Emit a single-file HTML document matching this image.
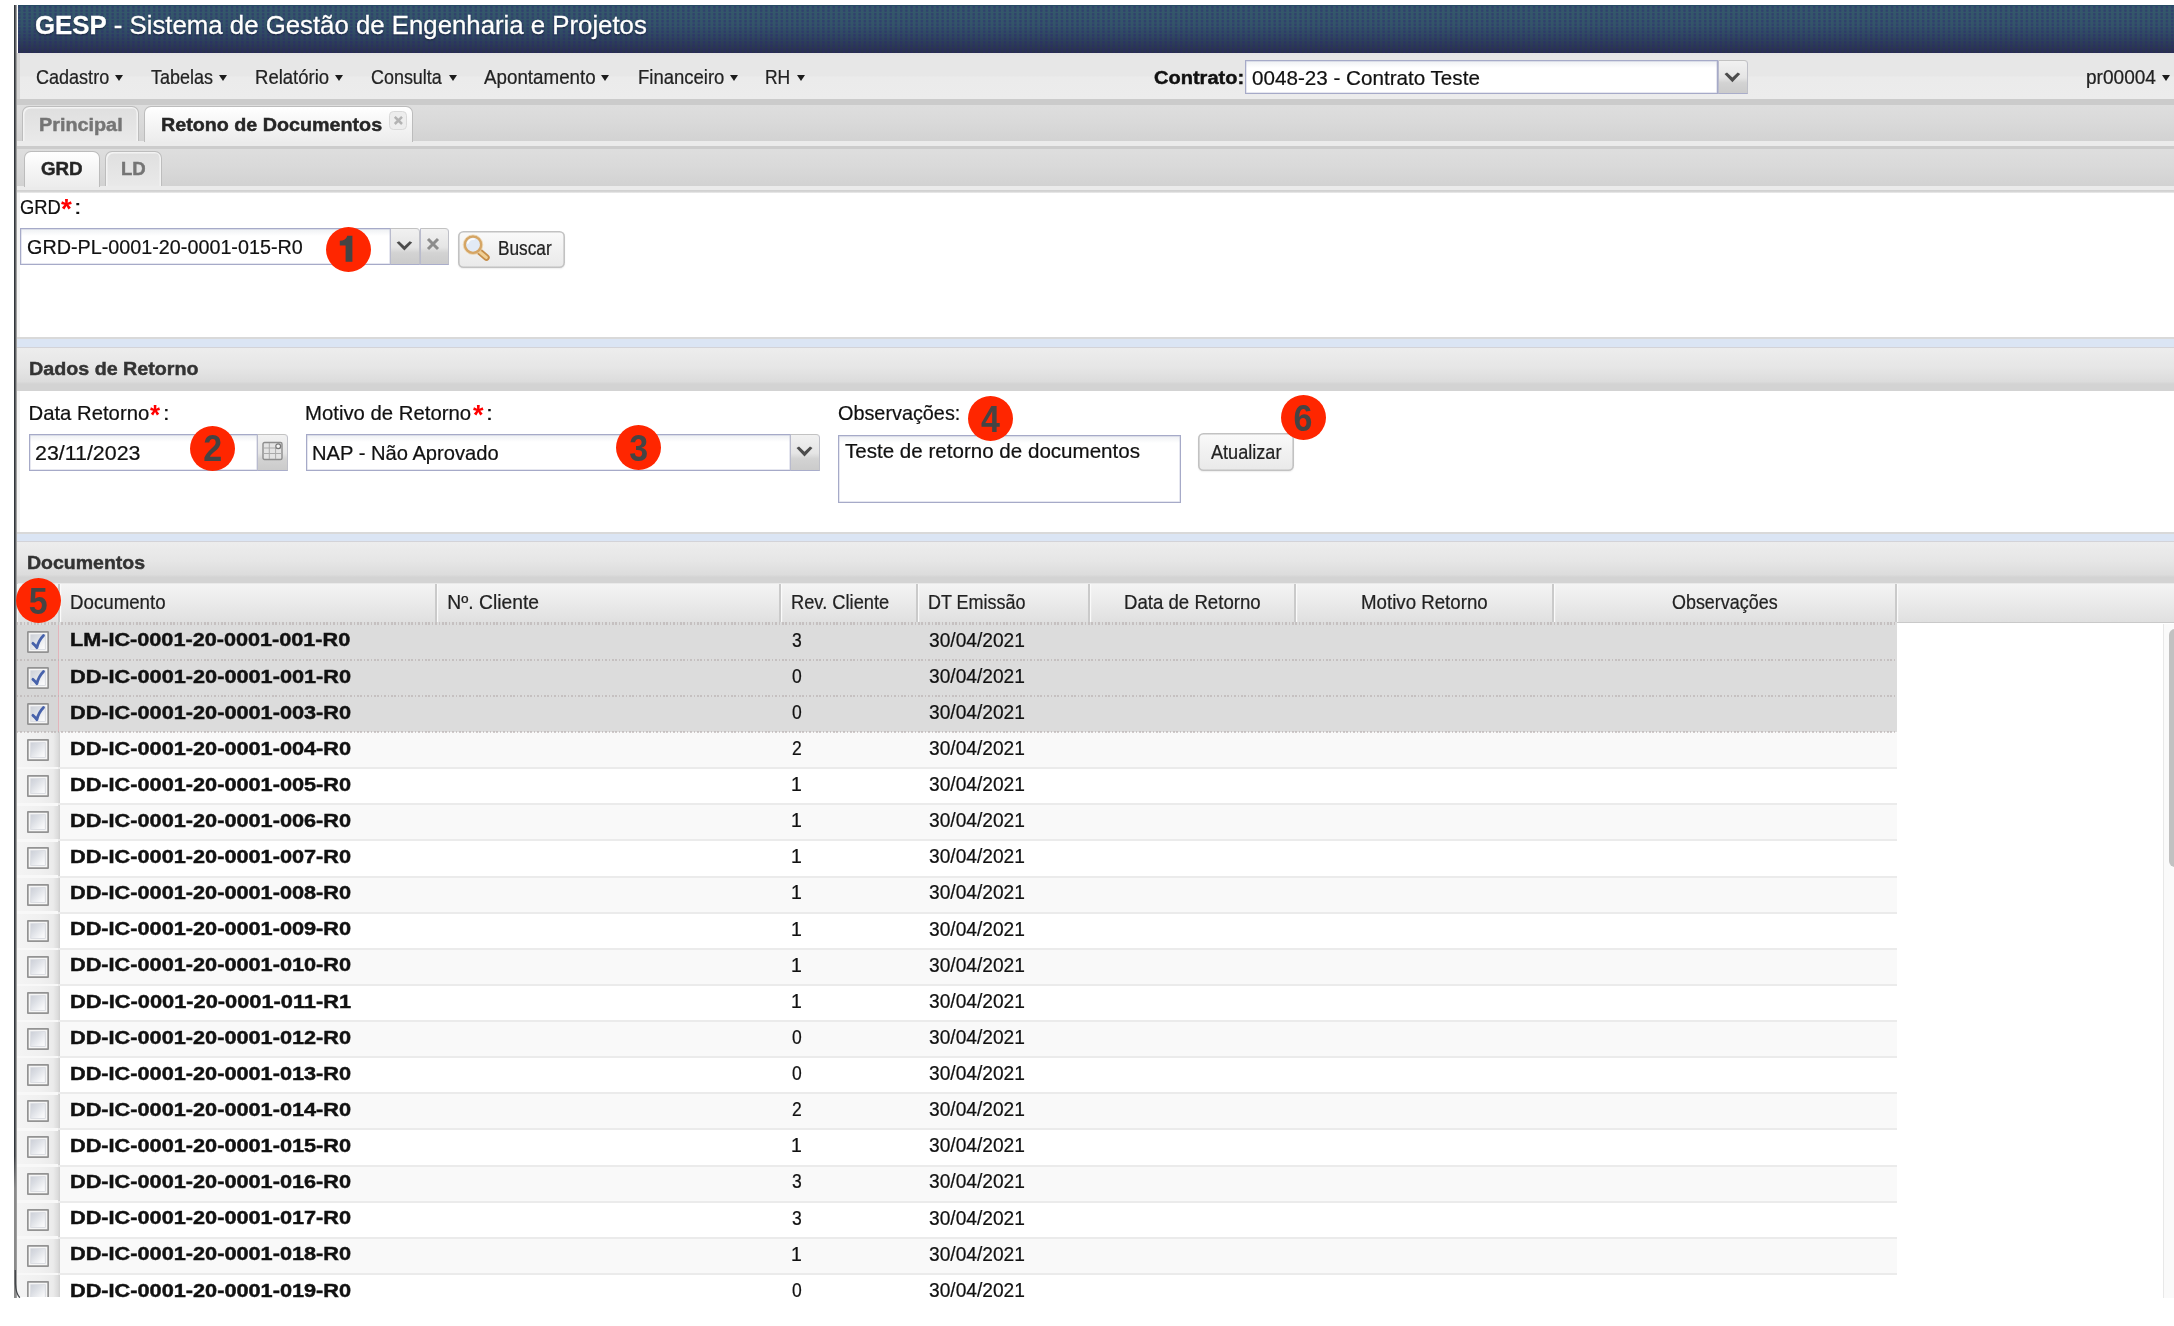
<!DOCTYPE html>
<html lang="pt-br"><head><meta charset="utf-8"><title>GESP - Retorno de Documentos</title>
<style>
html,body{margin:0;padding:0;background:#fff;}
body{width:2174px;height:1326px;overflow:hidden;position:relative;font-family:"Liberation Sans",sans-serif;}
div,i,span{box-sizing:border-box;}
.abs,.t,.arr,.row,.cb,.circ,.vd{position:absolute;display:block;}
.t{height:30px;line-height:30px;white-space:nowrap;transform-origin:0 50%;-webkit-text-stroke:0.22px currentColor;}
.arr{width:0;height:0;border-left:4.9px solid transparent;border-right:4.9px solid transparent;border-top:6px solid #1c1c1c;}
.hdr{left:18px;top:5px;width:2156px;height:47.7px;background-color:#2e4765;border-top:1px solid #254a62;
 background-image:radial-gradient(circle at 1.3px 1.2px,rgba(44,36,112,.42) 1px,rgba(44,36,112,0) 1.7px),linear-gradient(#34596b,#335469 40%,#2f4862 62%,#2b3b56 82%,#28304c 100%);
 background-size:5.2px 3.5px,100% 100%;}
.menubar{left:17px;top:52.7px;width:2157px;height:46.3px;background:linear-gradient(#e4e4e4,#e7e7e7 10%,#e7e7e7 50%,#ebebeb 52%,#ececec);}
.tabbar{left:17px;width:2157px;background:linear-gradient(#dedede,#d9d9d9 50%,#d2d2d2);}
.band{left:17px;width:2157px;}
.tab{border:1.5px solid #bdbdbd;border-bottom:none;border-radius:7px 7px 0 0;background:linear-gradient(#dfdfdf,#e9e9e9);box-shadow:inset 1.5px 1.5px 0 #f3f3f3,inset -1.5px 0 0 #f3f3f3;}
.tab.act{background:linear-gradient(#ffffff,#f6f6f6 45%,#ececec);border-color:#bcbcbc;box-shadow:none;}
.split{left:17px;width:2157px;background:#dbe5f4;border-top:2px solid #d9d9d9;border-bottom:1.2px solid #d3d3d8;}
.phdr{left:17px;width:2157px;background:linear-gradient(#ededed,#e6e6e6 45%,#dcdcdc 78%,#d3d3d3 84%,#d3d3d3);}
.inp{background:linear-gradient(#eef0f3,#fff 7px);border:1px solid #a6aac8;box-shadow:inset 0 0 0 .5px rgba(166,170,200,.55);}
.btnsq{border:1px solid #a9adcb;border-color:#c2c2c2 #bfc0c8 #a9adcb #b9bbcd;background:linear-gradient(#f1f1f1,#e5e5e5 52%,#d3d3d3 68%,#cbcbcb);}
.btn{border-radius:5.5px;background:linear-gradient(#fafafa,#f1f1f1 50%,#e9e9e9);box-shadow:inset 0 0 0 1.6px #c2c2c2,0 1px 1.5px rgba(0,0,0,.07);}
.circ{width:45px;height:45px;border-radius:50%;background:#ff2600;color:#444;font-weight:bold;font-size:34px;line-height:45px;text-align:center;}
.circ b{display:inline-block;transform:scaleY(1.11);transform-origin:50% 76%;position:relative;top:1.7px;}
#txt{position:absolute;left:0;top:0;width:2174px;height:1326px;will-change:transform;}
.bd{font-weight:bold;-webkit-text-stroke:0.45px currentColor;}
.thead{left:18px;top:583px;width:2156px;height:40px;background:linear-gradient(#f4f4f4,#ebebeb 45%,#e0e0e0);border-bottom:1px solid #c9c9c9;border-top:1px solid #e9e9e9;}
.vd{top:584px;width:1.6px;height:38px;background:#cacaca;box-shadow:1.2px 0 0 #fafafa;}
.row{left:17px;width:1880px;background:#fff;}
.row.alt{background:#f9f9f9;}
.row.sel{background:#dcdcdc;}
.row .cc{position:absolute;left:0;top:0;bottom:0;width:42.6px;background:linear-gradient(90deg,#f4f4f4,#f0f0f0 55%,#ebebeb 84%,#dcdcdc 95%,#cfcfcf);}
.row.sel .cc{background:#d6d6d6;border-right:1.2px solid #e2b4bb;width:42.4px;}
.rl{position:absolute;left:17px;width:1880px;height:2px;background:#ebebeb;}
.rl.dot{height:2.6px;background:repeating-linear-gradient(90deg,#b7afaf 0,#b7afaf 1.5px,rgba(220,220,220,0) 1.5px,rgba(220,220,220,0) 3.4px);opacity:.62;}
.cb{left:26.9px;width:22.1px;height:22.1px;border-radius:1px;background:linear-gradient(135deg,#c2c6cf,#dadde3 38%,#f4f5f7 68%,#fdfdfd 85%);box-shadow:inset 0 0 0 1.7px #939393,inset 0 0 0 3.3px #f6f6f6,inset 0 0 0 4.1px #d3d6dc;}
.cb svg{position:absolute;left:0;top:0;}
.rlc{position:absolute;left:17px;width:40.5px;height:2.6px;background:#f8f8f8;}

</style></head>
<body>
<!-- left window border -->
<div class="abs" style="left:14px;top:5px;width:3px;height:1292.7px;background:linear-gradient(90deg,#31353a 0,#31353a 1px,#606366 1px,#606366 2px,#a0a0a0 2px)"></div>
<div class="abs" style="left:14px;top:5px;width:3px;height:1292.7px;background:linear-gradient(90deg,#8a8a8a 0,#8a8a8a 2px,rgba(138,138,138,0) 2px);-webkit-mask-image:linear-gradient(rgba(0,0,0,0) 89%,#000 91.5%);mask-image:linear-gradient(rgba(0,0,0,0) 89%,#000 91.5%)"></div>
<div class="abs" style="left:17px;top:52.7px;width:2.8px;height:46px;background:#d6d6d6"></div>
<div class="abs" style="left:17px;top:193px;width:3px;height:1104px;background:#f4f4f4"></div>

<div class="abs hdr"></div>
<div class="abs menubar"></div>
<div class="abs" style="left:17px;top:52.7px;width:2.8px;height:46px;background:#d6d6d6"></div>
<div class="abs band" style="top:98.7px;height:6px;background:#cbcbcb"></div>
<div class="abs tabbar" style="top:104.5px;height:37px"></div>
<div class="abs band" style="top:141.4px;height:4.2px;background:#ebebeb"></div>
<div class="abs band" style="top:145.5px;height:4px;background:#cccccc"></div>
<div class="abs tabbar" style="top:149.3px;height:37px"></div>
<div class="abs band" style="top:186.2px;height:4px;background:#ebebeb"></div>
<div class="abs band" style="top:190px;height:3.4px;background:linear-gradient(#cfcfcf,#d6d6d6 60%,#f0f0f0)"></div>

<!-- main tabs -->
<div class="abs tab" style="left:21.6px;top:106.2px;width:117.4px;height:35.3px"></div>
<div class="abs tab act" style="left:143.5px;top:106.2px;width:269px;height:36px"></div>
<div class="abs" style="left:388.7px;top:111px;width:18.7px;height:18.8px;border:1.3px solid #d9d9d9;border-radius:4.5px;background:#ededed"></div>
<svg class="abs" style="left:388.7px;top:111px" width="19" height="19" viewBox="0 0 19 19"><path d="M5.8 5.8 L13 13 M13 5.8 L5.8 13" stroke="#b3b3b3" stroke-width="2.5" fill="none"/></svg>
<!-- sub tabs -->
<div class="abs tab act" style="left:23.7px;top:151.2px;width:76px;height:35.6px"></div>
<div class="abs tab" style="left:104.5px;top:151.2px;width:57.7px;height:35px"></div>

<!-- GRD combo -->
<div class="abs inp" style="left:20px;top:227.6px;width:370.5px;height:37px"></div>
<div class="abs btnsq" style="left:390px;top:227.6px;width:29.5px;height:37px;border-radius:0 4px 0 0"></div>
<div class="abs btnsq" style="left:419.5px;top:227.6px;width:29.5px;height:37px;border-radius:0 4px 0 0"></div>
<svg class="abs" style="left:394.5px;top:235.6px" width="20" height="20" viewBox="0 0 20 20"><path d="M1.6 6.6 L4.1 5.2 L9.4 10.2 L14.7 5.2 L17.2 6.6 L9.4 14.6 Z" fill="#4c4c4c"/></svg>
<svg class="abs" style="left:423.3px;top:233.6px" width="20" height="20" viewBox="0 0 20 20"><path d="M5 5 L15 15 M15 5 L5 15" fill="none" stroke="#8c8c8c" stroke-width="3"/></svg>
<!-- Buscar -->
<div class="abs btn" style="left:458px;top:230.5px;width:107px;height:37px"></div>
<svg class="abs" style="left:460px;top:233px" width="32" height="32" viewBox="0 0 32 32">
 <path d="M19.4 18.6 L26.4 24.6" stroke="#c58d49" stroke-width="6.6" stroke-linecap="round"/>
 <path d="M20.6 19.6 L26.2 24.4" stroke="#f0cf95" stroke-width="3.2" stroke-linecap="round"/>
 <circle cx="13" cy="11.7" r="8.3" fill="#e2eaf6" stroke="#d5a564" stroke-width="2.7"/>
 <circle cx="13" cy="11.7" r="9.8" fill="none" stroke="#ecd5ae" stroke-width=".9" opacity=".85"/>
 <path d="M7.8 10 A5.6 5.6 0 0 1 14 6.1" stroke="#fff" stroke-width="1.8" fill="none" opacity=".9" stroke-linecap="round"/>
</svg>

<!-- splitter 1 + panel header -->
<div class="abs split" style="top:336.6px;height:11.6px"></div>
<div class="abs phdr" style="top:348.2px;height:43.1px"></div>

<!-- Data retorno -->
<div class="abs inp" style="left:29px;top:434px;width:229px;height:37px"></div>
<div class="abs btnsq" style="left:257px;top:434px;width:31px;height:37px;border-radius:0 4px 0 0"></div>
<svg class="abs" style="left:262px;top:441px" width="22" height="22" viewBox="0 0 22 22">
 <rect x="1" y="1.5" width="19" height="17" rx="1.5" fill="#e4e4e4" stroke="#8d8d8d" stroke-width="1.4"/>
 <path d="M1.5 7 H19.5 M1.5 12.5 H19.5 M7.3 2 V18 M13.6 7 V18" stroke="#aaa" stroke-width="1"/>
 <circle cx="16.2" cy="5.2" r="2.4" fill="#f4f4f4" stroke="#777" stroke-width="1.2"/>
</svg>
<!-- Motivo select -->
<div class="abs inp" style="left:305.5px;top:434px;width:485px;height:37px"></div>
<div class="abs btnsq" style="left:790px;top:434px;width:30px;height:37px;border-radius:0 4px 0 0"></div>
<svg class="abs" style="left:795px;top:443px" width="20" height="20" viewBox="0 0 20 20"><path d="M1.5 5 L4 3.6 L9.5 8.8 L15 3.6 L17.5 5 L9.5 13.6 Z" fill="#4c4c4c"/></svg>
<!-- Observacoes textarea -->
<div class="abs inp" style="left:837.5px;top:434.5px;width:343.5px;height:68.2px"></div>
<!-- Atualizar -->
<div class="abs btn" style="left:1198.4px;top:433px;width:95.8px;height:37.6px"></div>

<!-- contrato select -->
<div class="abs inp" style="left:1245px;top:60px;width:473px;height:33.5px"></div>
<div class="abs btnsq" style="left:1717.5px;top:60px;width:30px;height:33.5px;border-radius:0 4px 0 0"></div>
<svg class="abs" style="left:1722.5px;top:67px" width="20" height="20" viewBox="0 0 20 20"><path d="M1.5 7 L4 5.6 L9.4 10.6 L14.7 5.6 L17.2 7 L9.4 15.2 Z" fill="#4c4c4c"/></svg>

<!-- splitter 2 + Documentos header -->
<div class="abs split" style="top:532px;height:10.4px"></div>
<div class="abs phdr" style="top:542.4px;height:41.4px"></div>

<!-- table -->
<div class="abs thead"></div>
<i class="vd" style="left:58.3px"></i><i class="vd" style="left:435.3px"></i><i class="vd" style="left:779.3px"></i><i class="vd" style="left:916.3px"></i>
<i class="vd" style="left:1088.3px"></i><i class="vd" style="left:1294.3px"></i><i class="vd" style="left:1552.3px"></i><i class="vd" style="left:1895.3px"></i>
<div class="abs" id="tbody" style="left:0;top:0;width:2174px;height:1297px;overflow:hidden">
<div class="row sel" style="top:623.7px;height:36.3px"><i class="cc"></i></div>
<div class="cb" style="top:630.7px"><svg viewBox="0 0 22 22" width="22" height="22"><path d="M5.9 12.3 C7 13.2 8.7 15 9.9 16.7 C10.9 12.6 13.1 8 16.5 4.6" fill="none" stroke="#4762ab" stroke-width="2.8" stroke-linecap="round" stroke-linejoin="round"/></svg></div>
<div class="row sel" style="top:659.8px;height:36.3px"><i class="cc"></i></div>
<div class="cb" style="top:666.8px"><svg viewBox="0 0 22 22" width="22" height="22"><path d="M5.9 12.3 C7 13.2 8.7 15 9.9 16.7 C10.9 12.6 13.1 8 16.5 4.6" fill="none" stroke="#4762ab" stroke-width="2.8" stroke-linecap="round" stroke-linejoin="round"/></svg></div>
<div class="row sel" style="top:695.9px;height:36.3px"><i class="cc"></i></div>
<div class="cb" style="top:702.9px"><svg viewBox="0 0 22 22" width="22" height="22"><path d="M5.9 12.3 C7 13.2 8.7 15 9.9 16.7 C10.9 12.6 13.1 8 16.5 4.6" fill="none" stroke="#4762ab" stroke-width="2.8" stroke-linecap="round" stroke-linejoin="round"/></svg></div>
<div class="row alt" style="top:732.1px;height:36.3px"><i class="cc"></i></div>
<div class="cb" style="top:739.1px"></div>
<div class="row" style="top:768.2px;height:36.3px"><i class="cc"></i></div>
<div class="cb" style="top:775.2px"></div>
<div class="row alt" style="top:804.3px;height:36.3px"><i class="cc"></i></div>
<div class="cb" style="top:811.3px"></div>
<div class="row" style="top:840.4px;height:36.3px"><i class="cc"></i></div>
<div class="cb" style="top:847.4px"></div>
<div class="row alt" style="top:876.5px;height:36.3px"><i class="cc"></i></div>
<div class="cb" style="top:883.5px"></div>
<div class="row" style="top:912.7px;height:36.3px"><i class="cc"></i></div>
<div class="cb" style="top:919.7px"></div>
<div class="row alt" style="top:948.8px;height:36.3px"><i class="cc"></i></div>
<div class="cb" style="top:955.8px"></div>
<div class="row" style="top:984.9px;height:36.3px"><i class="cc"></i></div>
<div class="cb" style="top:991.9px"></div>
<div class="row alt" style="top:1021.0px;height:36.3px"><i class="cc"></i></div>
<div class="cb" style="top:1028.0px"></div>
<div class="row" style="top:1057.1px;height:36.3px"><i class="cc"></i></div>
<div class="cb" style="top:1064.1px"></div>
<div class="row alt" style="top:1093.3px;height:36.3px"><i class="cc"></i></div>
<div class="cb" style="top:1100.3px"></div>
<div class="row" style="top:1129.4px;height:36.3px"><i class="cc"></i></div>
<div class="cb" style="top:1136.4px"></div>
<div class="row alt" style="top:1165.5px;height:36.3px"><i class="cc"></i></div>
<div class="cb" style="top:1172.5px"></div>
<div class="row" style="top:1201.6px;height:36.3px"><i class="cc"></i></div>
<div class="cb" style="top:1208.6px"></div>
<div class="row alt" style="top:1237.7px;height:36.3px"><i class="cc"></i></div>
<div class="cb" style="top:1244.7px"></div>
<div class="row" style="top:1273.9px;height:36.3px"><i class="cc"></i></div>
<div class="cb" style="top:1280.9px"></div>
<div class="rl" style="top:622.4px;height:2.6px;background:#dcdcdc"></div><div class="rl dot" style="top:622.4px"></div>
<div class="rl dot" style="top:658.5px"></div>
<div class="rl dot" style="top:694.6px"></div>
<div class="rl dot" style="top:730.8px"></div>
<div class="rl" style="top:767.2px"></div>
<div class="rlc" style="top:766.9px"></div>
<div class="rl" style="top:803.3px"></div>
<div class="rlc" style="top:803.0px"></div>
<div class="rl" style="top:839.4px"></div>
<div class="rlc" style="top:839.1px"></div>
<div class="rl" style="top:875.5px"></div>
<div class="rlc" style="top:875.2px"></div>
<div class="rl" style="top:911.7px"></div>
<div class="rlc" style="top:911.4px"></div>
<div class="rl" style="top:947.8px"></div>
<div class="rlc" style="top:947.5px"></div>
<div class="rl" style="top:983.9px"></div>
<div class="rlc" style="top:983.6px"></div>
<div class="rl" style="top:1020.0px"></div>
<div class="rlc" style="top:1019.7px"></div>
<div class="rl" style="top:1056.1px"></div>
<div class="rlc" style="top:1055.8px"></div>
<div class="rl" style="top:1092.3px"></div>
<div class="rlc" style="top:1092.0px"></div>
<div class="rl" style="top:1128.4px"></div>
<div class="rlc" style="top:1128.1px"></div>
<div class="rl" style="top:1164.5px"></div>
<div class="rlc" style="top:1164.2px"></div>
<div class="rl" style="top:1200.6px"></div>
<div class="rlc" style="top:1200.3px"></div>
<div class="rl" style="top:1236.7px"></div>
<div class="rlc" style="top:1236.4px"></div>
<div class="rl" style="top:1272.9px"></div>
<div class="rlc" style="top:1272.6px"></div>
<div class="rl" style="top:1309.0px"></div>
<div class="rlc" style="top:1308.7px"></div>
</div>
<!-- scrollbar -->
<div class="abs" style="left:2162.6px;top:624px;width:12px;height:674px;background:#fafafa;border-left:1.6px solid #e8e8e8"></div>
<div class="abs" style="left:2169px;top:628.8px;width:12px;height:238px;border-radius:6px;background:#c1c1c1"></div>

<div id="txt">
<i class="arr" style="left:114.8px;top:75.0px"></i>
<i class="arr" style="left:218.8px;top:75.0px"></i>
<i class="arr" style="left:335.3px;top:75.0px"></i>
<i class="arr" style="left:448.8px;top:75.0px"></i>
<i class="arr" style="left:601.3px;top:75.0px"></i>
<i class="arr" style="left:729.8px;top:75.0px"></i>
<i class="arr" style="left:796.8px;top:75.0px"></i>
<i class="arr" style="left:2161.6px;top:75.0px"></i>
<div class="t" id="t0" style="left:35.00px;top:7px;height:36px;line-height:36px;font-size:25.7px;color:#fff;text-shadow:0 1px 2px rgba(0,0,20,.55);-webkit-text-stroke:0.3px #fff;transform:scaleX(1.0035);"><b>GESP</b> - Sistema de Gestão de Engenharia e Projetos</div>
<div class="t" id="t1" style="left:35.50px;top:63px;height:29px;line-height:29px;font-size:19.3px;color:#222;transform:scaleX(0.9352);">Cadastro</div>
<div class="t" id="t2" style="left:150.70px;top:63px;height:29px;line-height:29px;font-size:19.3px;color:#222;transform:scaleX(0.9312);">Tabelas</div>
<div class="t" id="t3" style="left:254.54px;top:63px;height:29px;line-height:29px;font-size:19.3px;color:#222;transform:scaleX(0.9609);">Relatório</div>
<div class="t" id="t4" style="left:370.50px;top:63px;height:29px;line-height:29px;font-size:19.3px;color:#222;transform:scaleX(0.9295);">Consulta</div>
<div class="t" id="t5" style="left:484.00px;top:63px;height:29px;line-height:29px;font-size:19.3px;color:#222;transform:scaleX(0.9739);">Apontamento</div>
<div class="t" id="t6" style="left:637.64px;top:63px;height:29px;line-height:29px;font-size:19.3px;color:#222;transform:scaleX(0.9591);">Financeiro</div>
<div class="t" id="t7" style="left:764.89px;top:63px;height:29px;line-height:29px;font-size:19.3px;color:#222;transform:scaleX(0.9061);">RH</div>
<div class="t bd" id="t8" style="left:1154.00px;top:63px;height:29px;line-height:29px;font-size:18.8px;color:#111;transform:scaleX(1.0667);">Contrato:</div>
<div class="t" id="t9" style="left:1251.70px;top:62px;height:31px;line-height:31px;font-size:20.8px;color:#111;transform:scaleX(0.9921);">0048-23 - Contrato Teste</div>
<div class="t" id="t10" style="left:2085.61px;top:63px;height:29px;line-height:29px;font-size:19.3px;color:#222;transform:scaleX(0.9880);">pr00004</div>
<div class="t bd" id="t11" style="left:38.85px;top:110px;height:29px;line-height:29px;font-size:18.8px;color:#757575;transform:scaleX(1.0543);">Principal</div>
<div class="t bd" id="t12" style="left:160.85px;top:110px;height:29px;line-height:29px;font-size:18.8px;color:#262626;transform:scaleX(1.0490);">Retono de Documentos</div>
<div class="t bd" id="t13" style="left:41.10px;top:154px;height:29px;line-height:29px;font-size:18.8px;color:#262626;transform:scaleX(0.9979);">GRD</div>
<div class="t bd" id="t14" style="left:121.41px;top:154px;height:29px;line-height:29px;font-size:18.8px;color:#757575;transform:scaleX(0.9879);">LD</div>
<div class="t" id="t15" style="left:19.59px;top:192px;height:30px;line-height:30px;font-size:20.3px;color:#111;transform:scaleX(0.9060);">GRD</div>
<div class="t bd" id="t16" style="left:61.20px;top:189px;height:39px;line-height:39px;font-size:27.6px;color:#f00;-webkit-text-stroke:0;transform:scaleX(1.0080);">*</div>
<div class="t" id="t17" style="left:73.87px;top:192px;height:30px;line-height:30px;font-size:20.3px;color:#111;transform:scaleX(1.3307);">:</div>
<div class="t" id="t18" style="left:26.75px;top:231px;height:31px;line-height:31px;font-size:20.8px;color:#111;transform:scaleX(0.9505);">GRD-PL-0001-20-0001-015-R0</div>
<div class="t" id="t19" style="left:497.81px;top:234px;height:29px;line-height:29px;font-size:19.3px;color:#222;transform:scaleX(0.8944);">Buscar</div>
<div class="t bd" id="t20" style="left:28.55px;top:354px;height:29px;line-height:29px;font-size:18.8px;color:#333;transform:scaleX(1.0482);">Dados de Retorno</div>
<div class="t" id="t21" style="left:28.57px;top:398px;height:30px;line-height:30px;font-size:20.3px;color:#111;">Data Retorno</div>
<div class="t bd" id="t22" style="left:149.90px;top:395px;height:39px;line-height:39px;font-size:27.6px;color:#f00;-webkit-text-stroke:0;transform:scaleX(0.9354);">*</div>
<div class="t" id="t23" style="left:162.94px;top:398px;height:30px;line-height:30px;font-size:20.3px;color:#111;transform:scaleX(1.1644);">:</div>
<div class="t" id="t24" style="left:304.80px;top:398px;height:30px;line-height:30px;font-size:20.3px;color:#111;transform:scaleX(1.0022);">Motivo de Retorno</div>
<div class="t bd" id="t25" style="left:472.50px;top:395px;height:39px;line-height:39px;font-size:27.6px;color:#f00;-webkit-text-stroke:0;transform:scaleX(0.9808);">*</div>
<div class="t" id="t26" style="left:486.37px;top:398px;height:30px;line-height:30px;font-size:20.3px;color:#111;transform:scaleX(1.2309);">:</div>
<div class="t" id="t27" style="left:837.80px;top:398px;height:30px;line-height:30px;font-size:20.3px;color:#111;transform:scaleX(0.9774);">Observações:</div>
<div class="t" id="t28" style="left:34.77px;top:437px;height:31px;line-height:31px;font-size:20.8px;color:#111;transform:scaleX(1.0279);">23/11/2023</div>
<div class="t" id="t29" style="left:311.53px;top:437px;height:31px;line-height:31px;font-size:20.8px;color:#111;transform:scaleX(0.9685);">NAP - Não Aprovado</div>
<div class="t" id="t30" style="left:844.90px;top:435px;height:31px;line-height:31px;font-size:20.8px;color:#111;transform:scaleX(0.9890);">Teste de retorno de documentos</div>
<div class="t" id="t31" style="left:1211.00px;top:438px;height:29px;line-height:29px;font-size:19.3px;color:#222;transform:scaleX(0.9390);">Atualizar</div>
<div class="t bd" id="t32" style="left:27.26px;top:548px;height:29px;line-height:29px;font-size:18.8px;color:#333;transform:scaleX(1.0382);">Documentos</div>
<div class="t" id="t33" style="left:69.93px;top:588px;height:29px;line-height:29px;font-size:19.3px;color:#222;transform:scaleX(0.9692);">Documento</div>
<div class="t" id="t34" style="left:447.30px;top:588px;height:29px;line-height:29px;font-size:19.3px;color:#222;">Nº. Cliente</div>
<div class="t" id="t35" style="left:791.15px;top:588px;height:29px;line-height:29px;font-size:19.3px;color:#222;transform:scaleX(0.9483);">Rev. Cliente</div>
<div class="t" id="t36" style="left:928.47px;top:588px;height:29px;line-height:29px;font-size:19.3px;color:#222;transform:scaleX(0.9317);">DT Emissão</div>
<div class="t" id="t37" style="left:1124.03px;top:588px;height:29px;line-height:29px;font-size:19.3px;color:#222;transform:scaleX(0.9659);">Data de Retorno</div>
<div class="t" id="t38" style="left:1361.03px;top:588px;height:29px;line-height:29px;font-size:19.3px;color:#222;transform:scaleX(0.9688);">Motivo Retorno</div>
<div class="t" id="t39" style="left:1672.00px;top:588px;height:29px;line-height:29px;font-size:19.3px;color:#222;transform:scaleX(0.9295);">Observações</div>
<div class="t bd" id="t40" style="left:69.75px;top:625px;height:29px;line-height:29px;font-size:18.8px;color:#111;transform:scaleX(1.1522);">LM-IC-0001-20-0001-001-R0</div>
<div class="t" id="t41" style="left:792.10px;top:626px;height:29px;line-height:29px;font-size:19.3px;color:#111;transform:scaleX(0.9090);">3</div>
<div class="t" id="t42" style="left:929.40px;top:626px;height:29px;line-height:29px;font-size:19.3px;color:#111;transform:scaleX(0.9938);">30/04/2021</div>
<div class="t bd" id="t43" style="left:69.74px;top:662px;height:29px;line-height:29px;font-size:18.8px;color:#111;transform:scaleX(1.1556);">DD-IC-0001-20-0001-001-R0</div>
<div class="t" id="t44" style="left:792.10px;top:662px;height:29px;line-height:29px;font-size:19.3px;color:#111;transform:scaleX(0.9090);">0</div>
<div class="t" id="t45" style="left:929.40px;top:662px;height:29px;line-height:29px;font-size:19.3px;color:#111;transform:scaleX(0.9938);">30/04/2021</div>
<div class="t bd" id="t46" style="left:69.74px;top:698px;height:29px;line-height:29px;font-size:18.8px;color:#111;transform:scaleX(1.1556);">DD-IC-0001-20-0001-003-R0</div>
<div class="t" id="t47" style="left:792.10px;top:698px;height:29px;line-height:29px;font-size:19.3px;color:#111;transform:scaleX(0.9090);">0</div>
<div class="t" id="t48" style="left:929.40px;top:698px;height:29px;line-height:29px;font-size:19.3px;color:#111;transform:scaleX(0.9938);">30/04/2021</div>
<div class="t bd" id="t49" style="left:69.74px;top:734px;height:29px;line-height:29px;font-size:18.8px;color:#111;transform:scaleX(1.1556);">DD-IC-0001-20-0001-004-R0</div>
<div class="t" id="t50" style="left:792.10px;top:734px;height:29px;line-height:29px;font-size:19.3px;color:#111;transform:scaleX(0.9090);">2</div>
<div class="t" id="t51" style="left:929.40px;top:734px;height:29px;line-height:29px;font-size:19.3px;color:#111;transform:scaleX(0.9938);">30/04/2021</div>
<div class="t bd" id="t52" style="left:69.74px;top:770px;height:29px;line-height:29px;font-size:18.8px;color:#111;transform:scaleX(1.1556);">DD-IC-0001-20-0001-005-R0</div>
<div class="t" id="t53" style="left:791.09px;top:770px;height:29px;line-height:29px;font-size:19.3px;color:#111;transform:scaleX(1.0099);">1</div>
<div class="t" id="t54" style="left:929.40px;top:770px;height:29px;line-height:29px;font-size:19.3px;color:#111;transform:scaleX(0.9938);">30/04/2021</div>
<div class="t bd" id="t55" style="left:69.74px;top:806px;height:29px;line-height:29px;font-size:18.8px;color:#111;transform:scaleX(1.1556);">DD-IC-0001-20-0001-006-R0</div>
<div class="t" id="t56" style="left:791.09px;top:806px;height:29px;line-height:29px;font-size:19.3px;color:#111;transform:scaleX(1.0099);">1</div>
<div class="t" id="t57" style="left:929.40px;top:806px;height:29px;line-height:29px;font-size:19.3px;color:#111;transform:scaleX(0.9938);">30/04/2021</div>
<div class="t bd" id="t58" style="left:69.74px;top:842px;height:29px;line-height:29px;font-size:18.8px;color:#111;transform:scaleX(1.1556);">DD-IC-0001-20-0001-007-R0</div>
<div class="t" id="t59" style="left:791.09px;top:842px;height:29px;line-height:29px;font-size:19.3px;color:#111;transform:scaleX(1.0099);">1</div>
<div class="t" id="t60" style="left:929.40px;top:842px;height:29px;line-height:29px;font-size:19.3px;color:#111;transform:scaleX(0.9938);">30/04/2021</div>
<div class="t bd" id="t61" style="left:69.74px;top:878px;height:29px;line-height:29px;font-size:18.8px;color:#111;transform:scaleX(1.1556);">DD-IC-0001-20-0001-008-R0</div>
<div class="t" id="t62" style="left:791.09px;top:878px;height:29px;line-height:29px;font-size:19.3px;color:#111;transform:scaleX(1.0099);">1</div>
<div class="t" id="t63" style="left:929.40px;top:878px;height:29px;line-height:29px;font-size:19.3px;color:#111;transform:scaleX(0.9938);">30/04/2021</div>
<div class="t bd" id="t64" style="left:69.74px;top:914px;height:29px;line-height:29px;font-size:18.8px;color:#111;transform:scaleX(1.1556);">DD-IC-0001-20-0001-009-R0</div>
<div class="t" id="t65" style="left:791.09px;top:915px;height:29px;line-height:29px;font-size:19.3px;color:#111;transform:scaleX(1.0099);">1</div>
<div class="t" id="t66" style="left:929.40px;top:915px;height:29px;line-height:29px;font-size:19.3px;color:#111;transform:scaleX(0.9938);">30/04/2021</div>
<div class="t bd" id="t67" style="left:69.74px;top:950px;height:29px;line-height:29px;font-size:18.8px;color:#111;transform:scaleX(1.1556);">DD-IC-0001-20-0001-010-R0</div>
<div class="t" id="t68" style="left:791.09px;top:951px;height:29px;line-height:29px;font-size:19.3px;color:#111;transform:scaleX(1.0099);">1</div>
<div class="t" id="t69" style="left:929.40px;top:951px;height:29px;line-height:29px;font-size:19.3px;color:#111;transform:scaleX(0.9938);">30/04/2021</div>
<div class="t bd" id="t70" style="left:69.74px;top:987px;height:29px;line-height:29px;font-size:18.8px;color:#111;transform:scaleX(1.1605);">DD-IC-0001-20-0001-011-R1</div>
<div class="t" id="t71" style="left:791.09px;top:987px;height:29px;line-height:29px;font-size:19.3px;color:#111;transform:scaleX(1.0099);">1</div>
<div class="t" id="t72" style="left:929.40px;top:987px;height:29px;line-height:29px;font-size:19.3px;color:#111;transform:scaleX(0.9938);">30/04/2021</div>
<div class="t bd" id="t73" style="left:69.74px;top:1023px;height:29px;line-height:29px;font-size:18.8px;color:#111;transform:scaleX(1.1556);">DD-IC-0001-20-0001-012-R0</div>
<div class="t" id="t74" style="left:792.10px;top:1023px;height:29px;line-height:29px;font-size:19.3px;color:#111;transform:scaleX(0.9090);">0</div>
<div class="t" id="t75" style="left:929.40px;top:1023px;height:29px;line-height:29px;font-size:19.3px;color:#111;transform:scaleX(0.9938);">30/04/2021</div>
<div class="t bd" id="t76" style="left:69.74px;top:1059px;height:29px;line-height:29px;font-size:18.8px;color:#111;transform:scaleX(1.1556);">DD-IC-0001-20-0001-013-R0</div>
<div class="t" id="t77" style="left:792.10px;top:1059px;height:29px;line-height:29px;font-size:19.3px;color:#111;transform:scaleX(0.9090);">0</div>
<div class="t" id="t78" style="left:929.40px;top:1059px;height:29px;line-height:29px;font-size:19.3px;color:#111;transform:scaleX(0.9938);">30/04/2021</div>
<div class="t bd" id="t79" style="left:69.74px;top:1095px;height:29px;line-height:29px;font-size:18.8px;color:#111;transform:scaleX(1.1556);">DD-IC-0001-20-0001-014-R0</div>
<div class="t" id="t80" style="left:792.10px;top:1095px;height:29px;line-height:29px;font-size:19.3px;color:#111;transform:scaleX(0.9090);">2</div>
<div class="t" id="t81" style="left:929.40px;top:1095px;height:29px;line-height:29px;font-size:19.3px;color:#111;transform:scaleX(0.9938);">30/04/2021</div>
<div class="t bd" id="t82" style="left:69.74px;top:1131px;height:29px;line-height:29px;font-size:18.8px;color:#111;transform:scaleX(1.1556);">DD-IC-0001-20-0001-015-R0</div>
<div class="t" id="t83" style="left:791.09px;top:1131px;height:29px;line-height:29px;font-size:19.3px;color:#111;transform:scaleX(1.0099);">1</div>
<div class="t" id="t84" style="left:929.40px;top:1131px;height:29px;line-height:29px;font-size:19.3px;color:#111;transform:scaleX(0.9938);">30/04/2021</div>
<div class="t bd" id="t85" style="left:69.74px;top:1167px;height:29px;line-height:29px;font-size:18.8px;color:#111;transform:scaleX(1.1556);">DD-IC-0001-20-0001-016-R0</div>
<div class="t" id="t86" style="left:792.10px;top:1167px;height:29px;line-height:29px;font-size:19.3px;color:#111;transform:scaleX(0.9090);">3</div>
<div class="t" id="t87" style="left:929.40px;top:1167px;height:29px;line-height:29px;font-size:19.3px;color:#111;transform:scaleX(0.9938);">30/04/2021</div>
<div class="t bd" id="t88" style="left:69.74px;top:1203px;height:29px;line-height:29px;font-size:18.8px;color:#111;transform:scaleX(1.1556);">DD-IC-0001-20-0001-017-R0</div>
<div class="t" id="t89" style="left:792.10px;top:1204px;height:29px;line-height:29px;font-size:19.3px;color:#111;transform:scaleX(0.9090);">3</div>
<div class="t" id="t90" style="left:929.40px;top:1204px;height:29px;line-height:29px;font-size:19.3px;color:#111;transform:scaleX(0.9938);">30/04/2021</div>
<div class="t bd" id="t91" style="left:69.74px;top:1239px;height:29px;line-height:29px;font-size:18.8px;color:#111;transform:scaleX(1.1556);">DD-IC-0001-20-0001-018-R0</div>
<div class="t" id="t92" style="left:791.09px;top:1240px;height:29px;line-height:29px;font-size:19.3px;color:#111;transform:scaleX(1.0099);">1</div>
<div class="t" id="t93" style="left:929.40px;top:1240px;height:29px;line-height:29px;font-size:19.3px;color:#111;transform:scaleX(0.9938);">30/04/2021</div>
<div class="t bd" id="t94" style="left:69.74px;top:1276px;height:29px;line-height:29px;font-size:18.8px;color:#111;transform:scaleX(1.1556);">DD-IC-0001-20-0001-019-R0</div>
<div class="t" id="t95" style="left:792.10px;top:1276px;height:29px;line-height:29px;font-size:19.3px;color:#111;transform:scaleX(0.9090);">0</div>
<div class="t" id="t96" style="left:929.40px;top:1276px;height:29px;line-height:29px;font-size:19.3px;color:#111;transform:scaleX(0.9938);">30/04/2021</div>
</div>

<!-- red numbered markers -->
<div class="circ" style="left:326.2px;top:227.3px"><svg style="position:absolute;left:0;top:0" width="45" height="45" viewBox="0 0 45 45"><path d="M26.4 8.7 L26.4 34.8 L19.6 34.8 L19.6 18.4 L13.8 18.4 L13.8 13.8 C17.6 13.7 20.4 12 21.3 8.7 Z" fill="#444"/></svg></div>
<div class="circ" style="left:190.1px;top:425.6px"><b>2</b></div>
<div class="circ" style="left:616.1px;top:425.3px"><b>3</b></div>
<div class="circ" style="left:968px;top:396px"><b>4</b></div>
<div class="circ" style="left:15.7px;top:577.9px"><b>5</b></div>
<div class="circ" style="left:1280.5px;top:395px"><b>6</b></div>
<svg class="abs" style="left:12px;top:1262px" width="12" height="36" viewBox="0 0 12 36"><path d="M3.3 8 L3.4 22 Q3.9 31.5 7.8 35.7" fill="none" stroke="#44474b" stroke-width="1.3"/></svg>
<!-- bottom clip -->
<div class="abs" style="left:0;top:1297.7px;width:2174px;height:29px;background:#fff"></div>

</body></html>
